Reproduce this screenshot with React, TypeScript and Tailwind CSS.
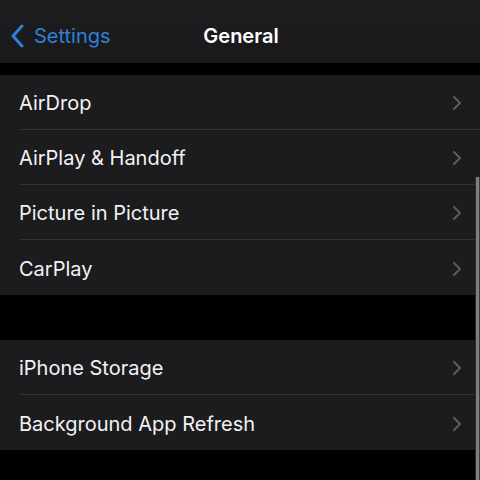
const groups = [
  ["AirDrop", "AirPlay & Handoff", "Picture in Picture", "CarPlay"],
  ["iPhone Storage", "Background App Refresh"],
];

function Chevron() {
  return (
    <svg width="10" height="16" viewBox="0 0 10 16" className="shrink-0">
      <path d="M2 2l6 6-6 6" fill="none" stroke="#5c5c60" strokeWidth="2" strokeLinecap="round" strokeLinejoin="round" />
    </svg>
  );
}

function Row({ label, last }: { label: string; last: boolean }) {
  return (
    <div className="flex h-[55px] items-stretch pl-[19px]">
      <div
        className={`flex flex-1 items-center justify-between pr-[18px] pt-[2px] ${
          last ? "" : "border-b border-[#313134]"
        }`}
      >
        <span className="text-[20px] text-[#f2f2f4]">{label}</span>
        <Chevron />
      </div>
    </div>
  );
}

export default function App() {
  return (
    <div
      className="relative h-[480px] w-[480px] overflow-hidden bg-black"
      style={{ fontFamily: "Inter, 'Liberation Sans', sans-serif" }}
    >
      <header className="relative flex h-[63px] items-center bg-gradient-to-b from-[#1e1e20] to-[#19191b] px-[10px]">
        <div className="flex items-center gap-[9px] pt-[8px] text-[#2f7fd8]">
          <svg width="15" height="24" viewBox="0 0 15 24">
            <path d="M12 2L3 12l9 10" fill="none" stroke="#2f7fd8" strokeWidth="3" strokeLinecap="round" strokeLinejoin="round" />
          </svg>
          <span className="text-[20px]">Settings</span>
        </div>
        <h1 className="absolute left-0 right-0 top-[21px] text-center text-[20px] font-semibold text-white pl-[2px]">
          General
        </h1>
      </header>

      <div className="mt-[12px] flex flex-col gap-[45px]">
        {groups.map((g, i) => (
          <div key={i} className="bg-[#1c1c1e]">
            {g.map((label, j) => (
              <Row key={label} label={label} last={j === g.length - 1} />
            ))}
          </div>
        ))}
      </div>

      <div className="absolute right-0 top-[177px] bottom-0 flex w-[5px]">
        <div className="w-[1px] bg-[#2a2a2c]" />
        <div className="w-[3px] bg-[#7e7e80]" />
        <div className="w-[1px] bg-[#3a3a3c]" />
      </div>
    </div>
  );
}
